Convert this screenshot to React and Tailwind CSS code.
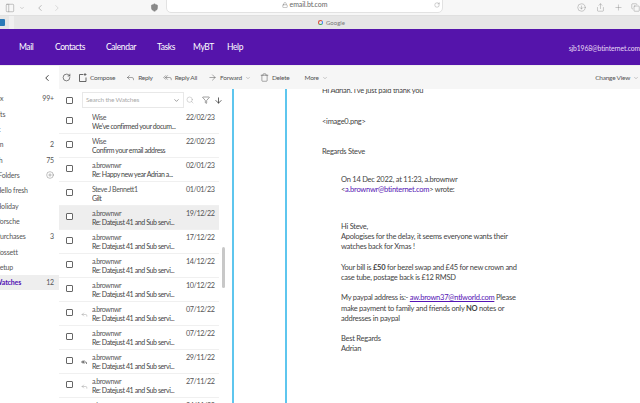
import React from "react";
import {
  ArrowDown,
  ArrowRight,
  ChevronDown,
  ChevronLeft,
  ChevronRight,
  CircleArrowDown,
  CirclePlus,
  Copy,
  Funnel,
  Lock,
  PanelLeft,
  Plus,
  Reply,
  ReplyAll,
  RotateCw,
  Search,
  Share,
  Shield,
  Trash,
} from "lucide-react";

const folders = [
  { name: "Inbox", count: "99+", cls: "-ml-[13px]" },
  { name: "Drafts", cls: "-ml-[13px]" },
  { name: "Sent", cls: "-ml-[13px]" },
  { name: "Spam", count: "2", cls: "-ml-[13px]" },
  { name: "Trash", count: "75", cls: "-ml-[13px]" },
  { name: "My Folders", plus: true, cls: "-ml-[13px]" },
  { name: "Hello fresh", cls: "-ml-[4px]" },
  { name: "Holiday", cls: "-ml-[4px]" },
  { name: "Porsche", cls: "-ml-[4px]" },
  { name: "Purchases", count: "3", cls: "-ml-[4px]" },
  { name: "Rossett", cls: "-ml-[4px]" },
  { name: "Setup", cls: "-ml-[4px]" },
  { name: "Watches", count: "12", cls: "-ml-[5px]", active: true },
];

const sub = "Re: Datejust 41 and Sub servi...";

const messages = [
  { from: "Wise", text: "We've confirmed your docum...", date: "22/02/23" },
  { from: "Wise", text: "Confirm your email address", date: "22/02/23" },
  { from: "a.brownwr", text: "Re: Happy new year Adrian a...", date: "02/01/23" },
  { from: "Steve J Bennett1", text: "Gilt", date: "01/01/23" },
  { from: "a.brownwr", text: sub, date: "19/12/22", selected: true },
  { from: "a.brownwr", text: sub, date: "17/12/22" },
  { from: "a.brownwr", text: sub, date: "14/12/22" },
  { from: "a.brownwr", text: sub, date: "10/12/22" },
  { from: "a.brownwr", text: sub, date: "07/12/22", icon: "reply" },
  { from: "a.brownwr", text: sub, date: "07/12/22" },
  { from: "a.brownwr", text: sub, date: "29/11/22", icon: "forward" },
  { from: "a.brownwr", text: sub, date: "27/11/22", icon: "reply" },
  { from: "a.brownwr", text: sub, date: "24/11/22" },
];

function ComposeIcon() {
  return (
    <svg width="8" height="9" viewBox="0 0 8 9" fill="none" stroke="#444" strokeWidth="0.8" className="mr-[3px]">
      <path d="M4 1.5H0.5V8.5H7V4.5" />
      <path d="M6 0V3M4.5 1.5H7.5" strokeWidth="0.7" />
    </svg>
  );
}

function ToolButton({ icon: Icon, label, className = "", caret, gap = "mr-[3px]" }) {
  return (
    <div className={`flex items-center ${className}`}>
      {Icon && <Icon size={9} strokeWidth={1.2} className={`text-[#444] ${gap}`} />}
      <span>{label}</span>
      {caret && <ChevronDown size={6} strokeWidth={1.2} className="text-[#555] ml-[3px]" />}
    </div>
  );
}

function MessageRow({ from, text, date, selected, icon }) {
  return (
    <div className={`flex h-[24px] shrink-0 w-[160px] border-b border-[#f0f0f0] ${selected ? "bg-[#eeeeee]" : ""}`}>
      <div className="w-[33px] flex items-center pl-[7px] pb-[2px]">
        <div className="w-[7px] h-[7px] border border-[#666] rounded-[1px] bg-white" />
        {icon === "reply" && <Reply size={7} strokeWidth={1.2} className="text-[#777] ml-[8px] mt-[3px]" />}
        {icon === "forward" && <ReplyAll size={6} strokeWidth={2.4} className="text-[#222] ml-[8px] mt-[3px]" />}
      </div>
      <div className="w-[94px] text-[#555] text-[7px] tracking-[-0.4px] leading-[9px] pt-[3px] whitespace-nowrap overflow-hidden">
        <div>{from}</div>
        <div className="text-[#444]">{text}</div>
      </div>
      <div className="text-[#555] text-[7.25px] tracking-[-0.4px] leading-[9px] pt-[3px] whitespace-nowrap">{date}</div>
    </div>
  );
}

export default function App() {
  return (
    <div className="w-[640px] h-[403px] overflow-hidden flex flex-col bg-white font-['Lato',sans-serif] text-[#444]">
      {/* safari toolbar */}
      <div className="h-[15px] shrink-0 bg-[#f7f7f7] flex items-center text-[#777] overflow-hidden">
        <PanelLeft size={10} strokeWidth={1} className="ml-[5px]" />
        <ChevronDown size={6} strokeWidth={1.2} className="ml-[4px]" />
        <ChevronLeft size={10} strokeWidth={1.2} className="ml-[10px]" />
        <ChevronRight size={10} strokeWidth={1.2} className="ml-[7px] text-[#bbb]" />
        <Shield size={9} strokeWidth={1.4} className="ml-[88px] fill-[#888]" />
        <div className="ml-[7px] w-[280px] h-[24px] -mt-[14px] rounded-[5px] bg-white border border-[#e2e2e2] flex items-end justify-center pb-[3px] relative text-[7px] tracking-[-0.1px] leading-[9px] text-[#666]">
          <Lock size={6} strokeWidth={1.4} className="mr-[2px] mb-[1px]" />
          email.bt.com
          <RotateCw size={6} strokeWidth={1.2} className="absolute right-[2px] bottom-[4px]" />
        </div>
        <CircleArrowDown size={9} strokeWidth={1} className="ml-[134px]" />
        <Share size={9} strokeWidth={1} className="ml-[10px]" />
        <Plus size={9} strokeWidth={1} className="ml-[9px]" />
        <Copy size={9} strokeWidth={1} className="ml-[8px] shrink-0" />
      </div>

      {/* tab strip */}
      <div className="h-[14px] shrink-0 bg-[#e6e6e6] flex items-center border-t border-[#e0e0e0]">
        <div className="w-[5px] h-[7px] bg-[#2a7ab8] rounded-r-[1px]" />
        <div className="w-[5px] h-[14px] bg-[#f0f0f0] ml-[4px]" />
        <div className="ml-[304px] w-[5px] h-[5px] rounded-full border border-[#d8553f] border-r-[#4285f4] border-b-[#34a853]" />
        <span className="ml-[3px] text-[6px] text-[#777]">Google</span>
      </div>

      {/* purple nav */}
      <div className="h-[36px] shrink-0 bg-[#5514ab] text-white flex items-center justify-between">
        <div className="flex text-[8.5px] tracking-[-0.4px] leading-[12px] pl-[19px] -mt-[1px]">
          <span className="w-[36px]">Mail</span>
          <span className="w-[51px]">Contacts</span>
          <span className="w-[51px]">Calendar</span>
          <span className="w-[36px]">Tasks</span>
          <span className="w-[34px]">MyBT</span>
          <span>Help</span>
        </div>
        <span className="text-[6.75px] tracking-[-0.1px] mt-[2px] whitespace-nowrap text-[#e8dcf5]">sjb1968@btinternet.com</span>
      </div>

      <div className="h-[1px] shrink-0 bg-[#eeeeee]" />

      {/* toolbar */}
      <div className="h-[23px] shrink-0 flex text-[6.5px] tracking-[-0.25px] text-[#555]">
        <div className="w-[59px] bg-white flex items-center justify-end pr-[7px]">
          <ChevronLeft size={10} strokeWidth={2} className="text-[#222]" />
        </div>
        <div className="flex-1 bg-[#f6f6f6] flex items-center pl-[3px] relative">
          <RotateCw size={9} strokeWidth={1.6} className="text-[#333]" />
          <ToolButton icon={ComposeIcon} label="Compose" className="ml-[8px]" />
          <ToolButton icon={Reply} label="Reply" className="ml-[11px]" />
          <ToolButton icon={ReplyAll} label="Reply All" className="ml-[10px]" />
          <ToolButton icon={ArrowRight} label="Forward" caret className="ml-[11px]" />
          <ToolButton icon={Trash} label="Delete" className="ml-[9px]" />
          <ToolButton label="More" caret className="ml-[15px]" />
          <ToolButton label="Change View" caret className="absolute right-[1px]" />
        </div>
      </div>

      <div className="flex-1 flex min-h-0">
        {/* folder list */}
        <div className="w-[59px] shrink-0 pt-[2px] overflow-hidden">
          {folders.map((f) => (
            <div
              key={f.name}
              className={`h-[15.33px] flex items-center justify-between pr-[5px] text-[7px] tracking-[-0.15px] whitespace-nowrap ${
                f.active ? "bg-[#eeeeee] text-[#5514b4] font-bold" : "text-[#555]"
              }`}
            >
              <span className={f.cls}>{f.name}</span>
              {f.count && <span className="font-normal text-[#555]">{f.count}</span>}
              {f.plus && <CirclePlus size={8} strokeWidth={1} className="text-[#444]" />}
            </div>
          ))}
        </div>

        {/* message list */}
        <div className="w-[170px] shrink-0 flex flex-col relative">
          <div className="h-[24px] shrink-0 flex items-center pl-[7px] pb-[2px] bg-white relative z-10">
            <div className="w-[7px] h-[7px] border border-[#666] rounded-[1px]" />
            <div className="ml-[9px] w-[102px] h-[16px] border border-[#e8e8e8] flex items-center justify-between pl-[3px] pr-[3px] text-[6.5px] tracking-[-0.2px] text-[#aaa]">
              <span>Search the Watches</span>
              <ChevronDown size={7} strokeWidth={1.6} className="text-[#333]" />
            </div>
            <Search size={8} strokeWidth={1} className="ml-[2px] text-[#888]" />
            <Funnel size={8} strokeWidth={1.4} className="ml-[8px] text-[#333]" />
            <ArrowDown size={9} strokeWidth={2} className="ml-[4px] text-[#333]" />
          </div>
          <div className="flex-1 overflow-hidden flex flex-col">
            <div className="-mt-[3px]">
              {messages.map((m, i) => (
                <MessageRow key={i} {...m} />
              ))}
            </div>
          </div>
          <div className="absolute right-[4px] top-[158px] w-[3px] h-[41px] rounded-full bg-[#c8c8c8]" />
        </div>

        {/* reading pane */}
        <div className="flex-1 border-l-2 border-[#5ec6ee] ml-[3px] flex min-h-0 overflow-hidden">
          <div className="w-[53px] shrink-0 border-r-2 border-[#5ec6ee]" />
          <div className="pl-[35px] w-[300px] text-[7.5px] tracking-[-0.25px] leading-[10.2px] text-[#444] pt-[1px]">
            <div className="-mt-[4px]">Hi Adrian. I've just paid thank you</div>
            <div className="mt-[21px]">&lt;image0.png&gt;</div>
            <div className="mt-[20px]">Regards Steve</div>
            <div className="pl-[19px] mt-[17px] w-[199px]">
              <div>On 14 Dec 2022, at 11:23, a.brownwr</div>
              <div>
                &lt;<span className="text-[#5514b4]">a.brownwr@btinternet.com</span>&gt; wrote:
              </div>
              <div className="mt-[27px]">Hi Steve,</div>
              <div>Apologises for the delay, it seems everyone wants their watches back for Xmas !</div>
              <div className="mt-[10.2px]">
                Your bill is <b>£50</b> for bezel swap and £45 for new crown and case tube, postage back is £12 RMSD
              </div>
              <div className="mt-[10.2px]">
                My paypal address is:- <span className="text-[#5514b4] underline">aw.brown37@ntlworld.com</span> Please
                make payment to family and friends only <b>NO</b> notes or addresses in paypal
              </div>
              <div className="mt-[10.2px]">Best Regards</div>
              <div>Adrian</div>
            </div>
          </div>
        </div>
      </div>
    </div>
  );
}
